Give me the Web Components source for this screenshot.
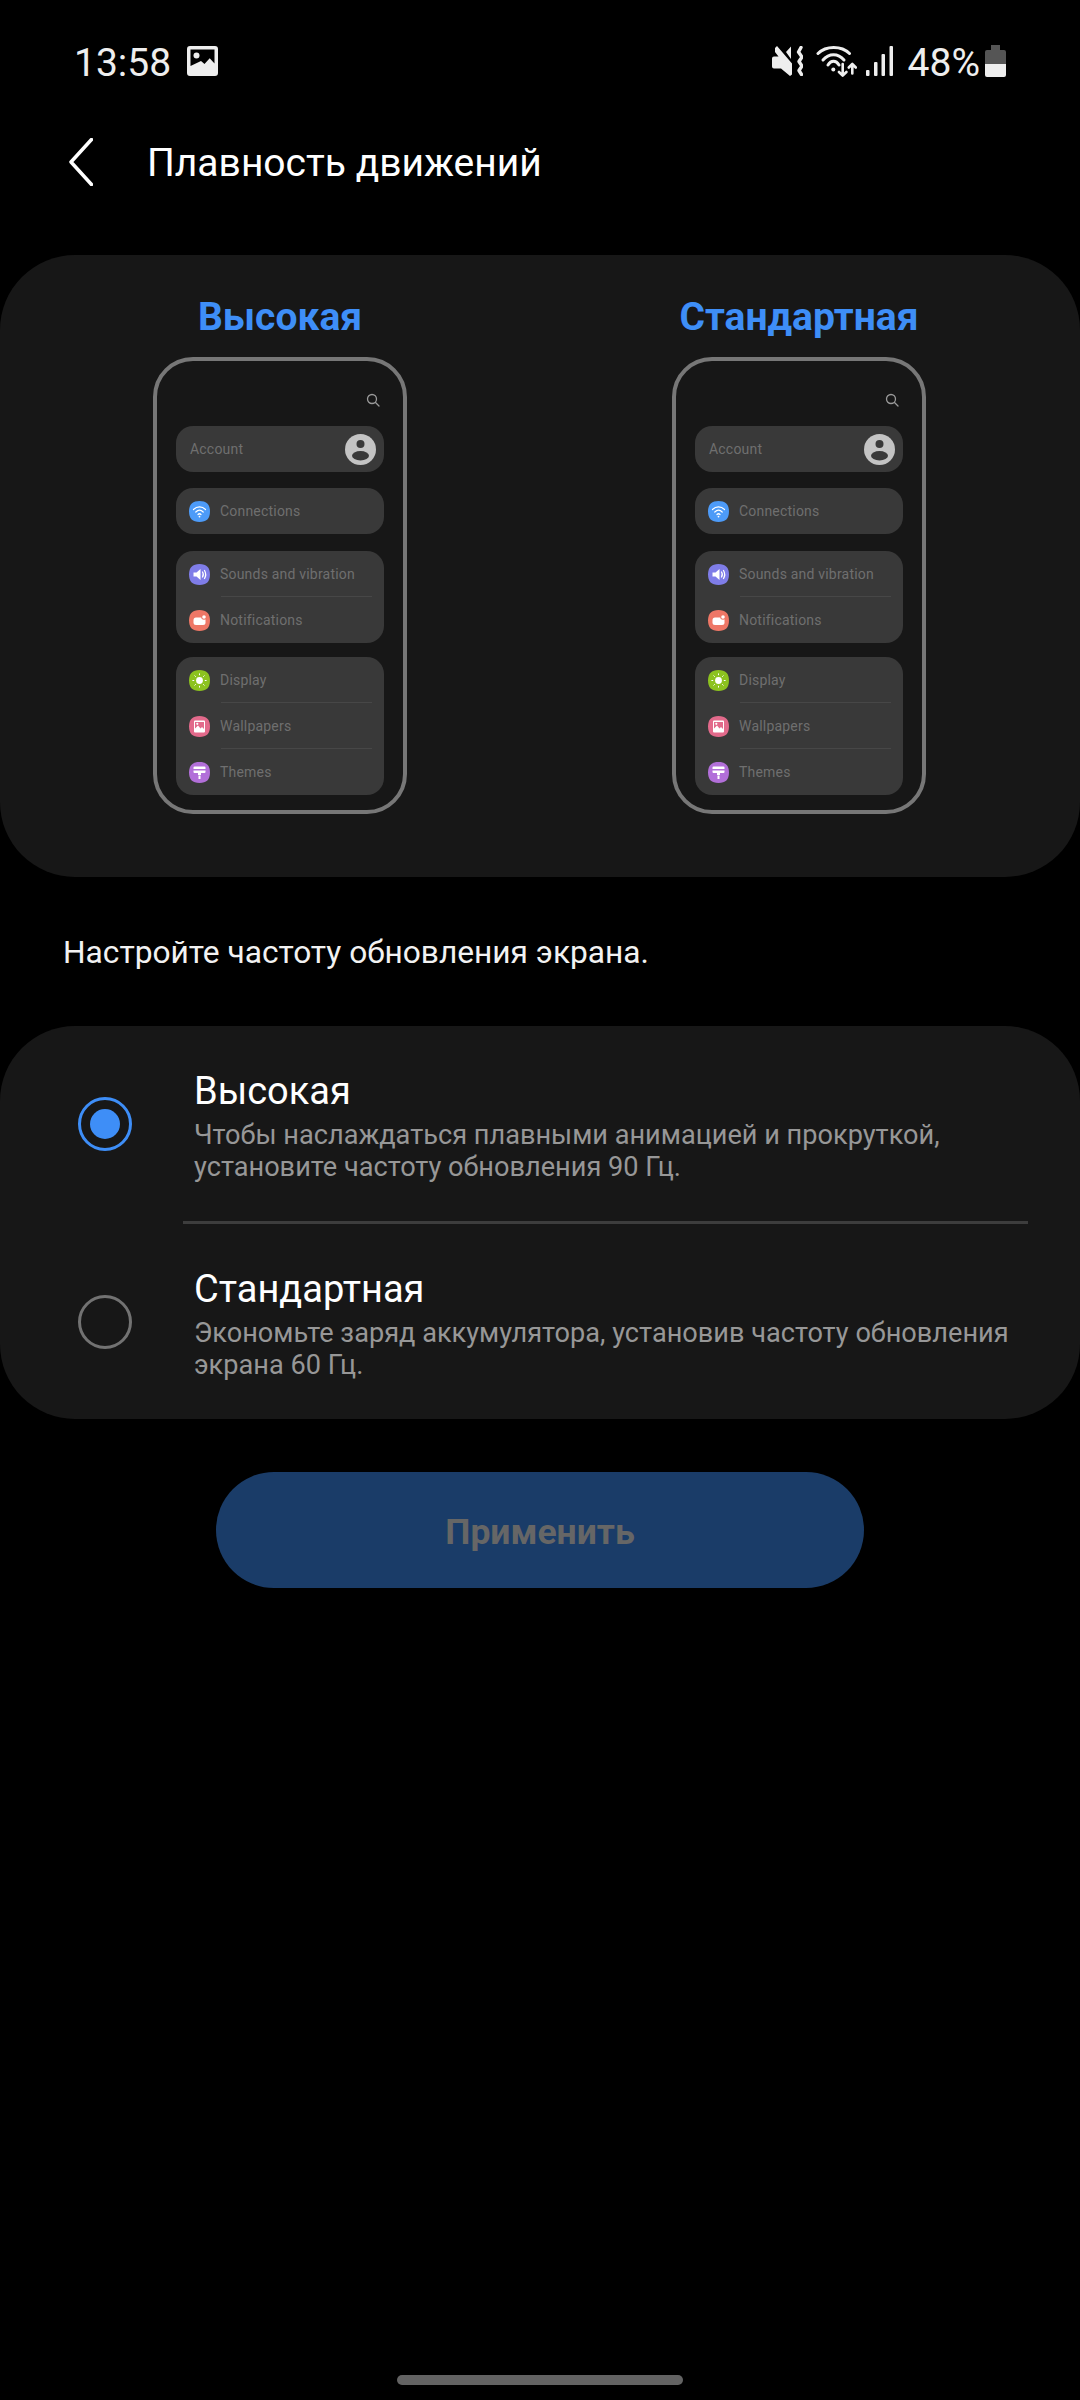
<!DOCTYPE html>
<html lang="ru">
<head>
<meta charset="utf-8">
<title>Плавность движений</title>
<style>
  html, body { margin: 0; background: #000; }
  body {
    width: 1080px;
    height: 2400px;
    display: flex;
    flex-direction: column;
    font-family: Roboto, "Noto Sans", sans-serif;
    overflow: hidden;
  }
</style>
</head>
<body>
<status-bar></status-bar>
<app-header>Плавность движений</app-header>
<preview-card>
  <phone-preview>Высокая</phone-preview>
  <phone-preview>Стандартная</phone-preview>
</preview-card>
<hint-text>Настройте частоту обновления экрана.</hint-text>
<option-card>
  <radio-option checked title="Высокая">Чтобы наслаждаться плавными анимацией и прокруткой,<br>установите частоту обновления 90 Гц.</radio-option>
  <radio-option title="Стандартная">Экономьте заряд аккумулятора, установив частоту обновления<br>экрана 60 Гц.</radio-option>
</option-card>
<apply-button>Применить</apply-button>
<home-indicator></home-indicator>

<script>
class StatusBar extends HTMLElement {
  constructor() {
    super();
    this.attachShadow({mode: 'open'}).innerHTML = `
      <style>
        :host { display: flex; align-items: center; height: 122px; padding: 0 74px 0 74px; color: #eee; font-size: 39px; }
        svg { display: block; flex: none; }
        .time { width: 95px; white-space: nowrap; margin-top: 3px; }
        .pic { margin-left: 18px; }
        .right { margin-left: auto; display: flex; align-items: center; }
        .pct { margin: 4px 5px 0 15px; white-space: nowrap; }
      </style>
      <span class="time">13:58</span>
      <svg class="pic" width="31" height="30" viewBox="0 0 31 30">
        <path fill="#eee" fill-rule="evenodd" d="M3 0h25a3 3 0 0 1 3 3v24a3 3 0 0 1-3 3H3a3 3 0 0 1-3-3V3a3 3 0 0 1 3-3zM3.500 3.500V20L14 15l3.500 3 5.200-5.700 4.800 5.200v-14z"/>
        <circle cx="9.500" cy="9.500" r="3" fill="#eee"/>
      </svg>
      <div class="right">
        <svg width="31" height="30" viewBox="0 0 31 30">
          <path fill="#eee" d="M3 2 5 0l15 17.500v11L18 30l-9-7.500H2a2 2 0 0 1-2-2v-8a2 2 0 0 1 2-2h4.500L3 6zM14 6l5-5.500V13z"/>
          <path fill="none" stroke="#eee" stroke-width="3.400" stroke-linecap="round" stroke-linejoin="round" d="M29 1.500 26.500 6 30 11l-3 4.500 3 4.500-3 4.500 2.500 4"/>
        </svg>
        <svg style="margin-left:13px" width="41" height="31" viewBox="0 0 41 31">
          <g fill="none" stroke="#eee" stroke-width="3" stroke-linecap="round">
            <path d="M2 7.500C10-.5 25.500-.5 33.500 7.500"/>
            <path d="M7 14C13 7 22 7 28 14"/>
            <path d="M12 19c3-5 8-5 11 0"/>
          </g>
          <circle cx="17.300" cy="23.500" r="2" fill="#eee"/>
          <g fill="none" stroke="#eee" stroke-width="2.600" stroke-linecap="round" stroke-linejoin="round">
            <path d="M26.700 18v11.500M23 26l3.700 3.700 3.700-3.700"/>
            <path d="M36.300 27.500V18M32.800 21.500l3.500-3.500 3.500 3.500"/>
          </g>
        </svg>
        <svg style="margin-left:9px" width="27" height="30" viewBox="0 0 27 30">
          <g fill="#eee">
            <rect x="0" y="24" width="3.500" height="6" rx="1"/>
            <rect x="8" y="16" width="3.500" height="14" rx="1"/>
            <rect x="15.500" y="8" width="3.500" height="22" rx="1"/>
            <rect x="23.500" y="0" width="3.500" height="30" rx="1"/>
          </g>
        </svg>
        <span class="pct">48%</span>
        <svg width="21" height="32" viewBox="0 0 21 32">
          <path fill="#555" d="M6 0h9v5h4a2 2 0 0 1 2 2v12H0V7a2 2 0 0 1 2-2h4z"/>
          <path fill="#eee" d="M0 19h21v11a2 2 0 0 1-2 2H2a2 2 0 0 1-2-2z"/>
        </svg>
      </div>`;
  }
}

class AppHeader extends HTMLElement {
  constructor() {
    super();
    this.attachShadow({mode: 'open'}).innerHTML = `
      <style>
        :host { display: flex; align-items: center; height: 84px; padding-left: 69px; color: #fff; font-size: 39px; }
        svg { display: block; flex: none; margin-top: -4px; }
        span { margin-left: 54px; margin-top: -2px; }
      </style>
      <svg width="24" height="48" viewBox="0 0 24 48">
        <path fill="none" stroke="#fff" stroke-width="3.500" stroke-linecap="round" stroke-linejoin="round" d="M22.500 1.500 2 24l20.500 22.500"/>
      </svg>
      <span><slot></slot></span>`;
  }
}

class PreviewCard extends HTMLElement {
  constructor() {
    super();
    this.attachShadow({mode: 'open'}).innerHTML = `
      <style>
        :host { display: flex; justify-content: space-between; height: 622px; box-sizing: border-box; margin-top: 49px; padding: 36px 154px 0 153px; background: #171717; border-radius: 75px; }
      </style>
      <slot></slot>`;
  }
}

const ICONS = {
  wifi: ['#4d9bf8', `<g fill="none" stroke="#fff" stroke-width="1.200" stroke-linecap="round"><path d="M4.500 8.500c3.500-3.500 8.500-3.500 12 0"/><path d="M6.800 11c2.300-2.200 5.100-2.200 7.400 0"/><path d="M9 13.500c1-1 2-1 3 0"/></g><circle cx="10.500" cy="15.600" r=".9" fill="#fff"/>`],
  sound: ['#7f7de8', `<path fill="#fff" d="M4.500 8.500h3L11.500 5v11l-4-3.500h-3z"/><path fill="none" stroke="#fff" stroke-width="1.300" stroke-linecap="round" d="M13.500 8c1 1.500 1 3.500 0 5M15.500 6.500c1.500 2.500 1.500 5.500 0 8"/>`],
  notify: ['#ee7766', `<rect x="4.500" y="7.500" width="12" height="7.500" rx="2.500" fill="#fff"/><circle cx="15" cy="7" r="2.800" fill="#ee7766"/><circle cx="15" cy="7" r="1.800" fill="#fff"/>`],
  display: ['#8cc21f', `<circle cx="10.500" cy="10.500" r="3.400" fill="#fff"/><g stroke="#fff" stroke-width="1" stroke-linecap="round"><path d="M10.500 3.800v1M10.500 16.200v1M3.800 10.500h1M16.200 10.500h1M5.800 5.800l.7.7M14.500 14.500l.7.7M5.800 15.200l.7-.7M14.500 6.500l.7-.7"/></g>`],
  wall: ['#e26a8b', `<path fill="#fff" fill-rule="evenodd" d="M6 4.500h9A1 1 0 0 1 16 5.500v10a1 1 0 0 1-1 1H6a1 1 0 0 1-1-1v-10a1 1 0 0 1 1-1zM6 6v6.500l3-3 2.500 3 1.500-1.500 2 2V6z"/><circle cx="8.300" cy="7.800" r="1.100" fill="#fff"/>`],
  themes: ['#b26fd9', `<path fill="#fff" d="M5.500 4.500h10a1 1 0 0 1 1 1v1.500h-12V5.500a1 1 0 0 1 1-1zM4.500 8.500h12V10a1 1 0 0 1-1 1h-3.500v2h-3v-2h-3.500a1 1 0 0 1-1-1zM9.500 13.500h2v3.500h-2z"/>`]
};

class SettingsRow extends HTMLElement {
  constructor() {
    super();
    this.attachShadow({mode: 'open'});
  }

  connectedCallback() {
    const icon = ICONS[this.getAttribute('icon')];
    this.shadowRoot.innerHTML = `
      <style>
        :host { display: flex; align-items: center; height: 46px; padding-left: 13px; position: relative; color: #6f6f6f; font-size: 14px; letter-spacing: .2px; }
        svg { display: block; flex: none; margin-right: 10px; }
        :host([line])::after { content: ''; position: absolute; left: 45px; right: 12px; bottom: 0; height: 1px; background: #474747; }
      </style>
      <svg width="21" height="21" viewBox="0 0 21 21">
        <path fill="${icon[0]}" d="M10.500 0C17.500 0 21 3.500 21 10.500S17.500 21 10.500 21 0 17.500 0 10.500 3.500 0 10.500 0z"/>
        ${icon[1]}
      </svg>
      <slot></slot>`;
  }
}

class PhonePreview extends HTMLElement {
  constructor() {
    super();
    this.attachShadow({mode: 'open'}).innerHTML = `
      <style>
        :host { display: flex; flex-direction: column; align-items: center; width: 254px; }
        .label { height: 50px; line-height: 53px; margin-bottom: 16px; color: #3e8ef7; font-size: 39px; font-weight: 700; white-space: nowrap; }
        .phone { width: 254px; height: 457px; box-sizing: border-box; padding: 0 19px; border: 4px solid #777; border-radius: 40px; display: flex; flex-direction: column; }
        .search { height: 65px; flex: none; display: flex; justify-content: flex-end; padding: 32px 4px 0 0; box-sizing: border-box; }
        .group { background: #393939; border-radius: 17px; margin-bottom: 15px; flex: none; }
        .account { display: flex; align-items: center; justify-content: space-between; height: 46px; padding: 0 8px 0 14px; color: #6f6f6f; font-size: 14px; letter-spacing: .2px; margin-bottom: 16px; }
        .account svg { display: block; }
        .one { margin-bottom: 17px; }
        .last { margin-bottom: 0; }
      </style>
      <div class="label"><slot></slot></div>
      <div class="phone">
        <div class="search">
          <svg width="14" height="14" viewBox="0 0 14 14"><circle cx="6" cy="6" r="4.500" fill="none" stroke="#9a9a9a" stroke-width="1.300"/><path d="m9.500 9.500 3.500 3.500" stroke="#9a9a9a" stroke-width="1.300" stroke-linecap="round"/></svg>
        </div>
        <div class="group account">
          <span>Account</span>
          <svg width="31" height="31" viewBox="0 0 31 31">
            <circle cx="15.500" cy="15.500" r="15.500" fill="#c4c4c4"/>
            <circle cx="15.500" cy="10" r="4" fill="#393939"/>
            <ellipse cx="15.500" cy="21.700" rx="8.500" ry="4.700" fill="#393939"/>
          </svg>
        </div>
        <div class="group one"><settings-row icon="wifi">Connections</settings-row></div>
        <div class="group" style="margin-bottom:14px">
          <settings-row icon="sound" line>Sounds and vibration</settings-row>
          <settings-row icon="notify">Notifications</settings-row>
        </div>
        <div class="group last">
          <settings-row icon="display" line>Display</settings-row>
          <settings-row icon="wall" line>Wallpapers</settings-row>
          <settings-row icon="themes">Themes</settings-row>
        </div>
      </div>`;
  }
}

class HintText extends HTMLElement {
  constructor() {
    super();
    this.attachShadow({mode: 'open'}).innerHTML = `
      <style>
        :host { display: block; margin-top: 56px; padding-left: 63px; color: #f2f2f2; font-size: 31.700px; line-height: 40px; }
      </style>
      <slot></slot>`;
  }
}

class OptionCard extends HTMLElement {
  constructor() {
    super();
    this.attachShadow({mode: 'open'}).innerHTML = `
      <style>
        :host { display: block; margin-top: 53px; height: 393px; background: #171717; border-radius: 75px; }
        ::slotted(radio-option:first-child) { height: 196px; }
        ::slotted(radio-option:last-child) { height: 195px; }
      </style>
      <slot></slot>`;
  }
}

class RadioOption extends HTMLElement {
  constructor() {
    super();
    this.attachShadow({mode: 'open'});
  }

  connectedCallback() {
    const on = this.hasAttribute('checked');
    this.shadowRoot.innerHTML = `
      <style>
        :host { display: flex; align-items: center; box-sizing: border-box; padding-left: 78px; position: relative; }
        :host([checked])::after { content: ''; position: absolute; left: 183px; right: 52px; bottom: -2px; height: 3px; background: #3d3d3d; }
        :host(:last-child) { margin-top: 2px; }
        .radio { width: 54px; height: 54px; box-sizing: border-box; flex: none; border-radius: 50%; border: 3px solid ${on ? '#3e8ef7' : '#727272'}; display: flex; align-items: center; justify-content: center; }
        .dot { width: 30px; height: 30px; border-radius: 50%; background: #3e8ef7; }
        .text { margin-left: 62px; padding-top: 3px; }
        .title { color: #fff; font-size: 38px; line-height: 46px; margin-bottom: 5px; }
        .desc { color: #979797; font-size: 27.150px; line-height: 32px; white-space: nowrap; }
      </style>
      <div class="radio">${on ? '<div class="dot"></div>' : ''}</div>
      <div class="text">
        <div class="title">${this.getAttribute('title')}</div>
        <div class="desc"><slot></slot></div>
      </div>`;
  }
}

class ApplyButton extends HTMLElement {
  constructor() {
    super();
    this.attachShadow({mode: 'open'}).innerHTML = `
      <style>
        :host { display: flex; align-items: center; justify-content: center; box-sizing: border-box; width: 648px; height: 116px; margin: 53px auto 0; padding-top: 3px; border-radius: 58px; background: #1a3c68; color: #666; font-size: 35.500px; font-weight: 700; }
      </style>
      <slot></slot>`;
  }
}

class HomeIndicator extends HTMLElement {
  constructor() {
    super();
    this.attachShadow({mode: 'open'}).innerHTML = `
      <style>
        :host { display: block; width: 286px; height: 10px; margin: auto auto 15px; border-radius: 5px; background: #636363; }
      </style>`;
  }
}

customElements.define('status-bar', StatusBar);
customElements.define('app-header', AppHeader);
customElements.define('preview-card', PreviewCard);
customElements.define('settings-row', SettingsRow);
customElements.define('phone-preview', PhonePreview);
customElements.define('hint-text', HintText);
customElements.define('option-card', OptionCard);
customElements.define('radio-option', RadioOption);
customElements.define('apply-button', ApplyButton);
customElements.define('home-indicator', HomeIndicator);
</script>
</body>
</html>
